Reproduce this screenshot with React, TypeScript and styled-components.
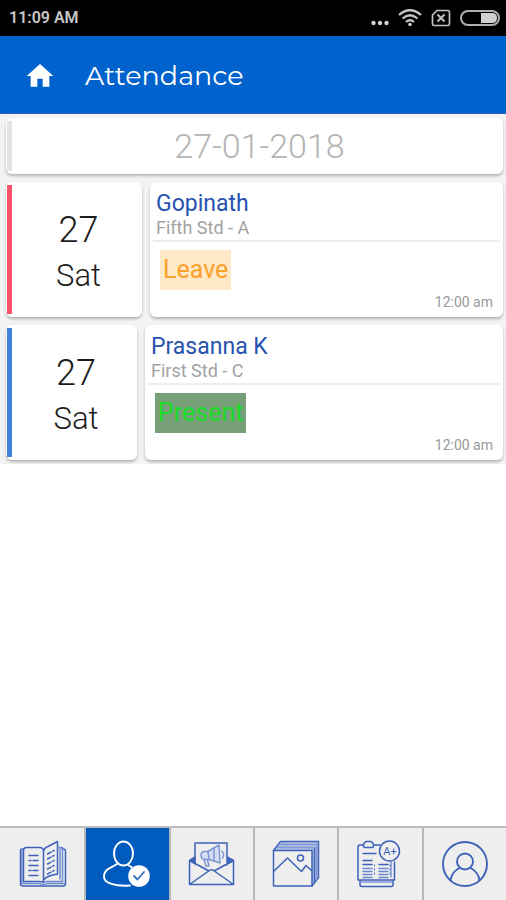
import React from "react";
import styled, { createGlobalStyle } from "styled-components";

const GlobalStyle = createGlobalStyle`
  * { box-sizing: border-box; }
  html, body { margin: 0; background: #ffffff; }
  body { font-family: Roboto, "Liberation Sans", sans-serif; }
  button { font: inherit; }
`;

const Screen = styled.div`
  display: flex;
  flex-direction: column;
  min-height: 100vh;
`;

const StatusBar = styled.div`
  display: flex;
  align-items: center;
  justify-content: space-between;
  height: 36px;
  padding: 0 6px 0 9px;
  background: #000000;
  color: #c8c8c8;
`;

const Clock = styled.span`
  font-size: 16px;
  font-weight: 600;
  line-height: 20px;
`;

const StatusIcons = styled.div`
  display: flex;
  align-items: center;
  gap: 9px;
  svg { display: block; }
`;

const Header = styled.header`
  display: flex;
  align-items: center;
  gap: 28px;
  height: 78px;
  padding: 2px 24px 0;
  background: #0062cc;
  border-bottom: 1px solid #2a63c4;
  color: #ffffff;
`;

const HomeButton = styled.button`
  display: flex;
  padding: 0;
  border: 0;
  background: none;
  color: inherit;
  cursor: pointer;
`;

const Title = styled.h1`
  margin: 0;
  padding-left: 1px;
  font-family: Montserrat, Inter, sans-serif;
  font-size: 27px;
  font-weight: 400;
  line-height: 36px;
`;

const Content = styled.main`
  display: flex;
  flex-direction: column;
  gap: 8px;
  padding: 4px 3px 4px 6px;
  background: #f3f3f3;
`;

const Card = styled.div`
  display: flex;
  min-width: 0;
  border-radius: 6px;
  background: #ffffff;
  box-shadow: 0 2px 3px rgba(0, 0, 0, 0.26);
`;

const Accent = styled.span<{ $color: string }>`
  flex: none;
  width: 5px;
  margin: 3px 0 3px 1px;
  background: ${(p) => p.$color};
`;

const DateCard = styled(Card)`
  height: 56px;
  align-items: stretch;
`;

const DateButton = styled.button`
  flex: 1;
  padding: 0 0 0 4px;
  border: 0;
  background: none;
  color: #b4b4b4;
  font-size: 34px;
  font-weight: 300;
  line-height: 56px;
  cursor: pointer;
`;

const Row = styled.article<{ $day: number; $detail: number }>`
  display: grid;
  grid-template-columns: ${(p) => p.$day}fr ${(p) => p.$detail}fr;
  gap: 8px;
`;

const DayText = styled.div`
  display: flex;
  flex: 1;
  flex-direction: column;
  align-items: center;
  justify-content: center;
  padding: 6px 0 0 3px;
  color: #1c1c1c;
  font-weight: 300;
`;

const DayNumber = styled.span`
  font-size: 36px;
  line-height: 46px;
`;

const DayName = styled.span`
  font-size: 31px;
  line-height: 46px;
`;

const Detail = styled(Card)`
  flex-direction: column;
  height: 135px;
`;

const Person = styled.div`
  margin: 0 3px;
  padding: 8px 3px 2px;
  border-bottom: 2px solid #eeeeee;
`;

const Name = styled.h2`
  margin: 0;
  color: #2752b0;
  font-size: 23px;
  font-weight: 400;
  line-height: 28px;
`;

const ClassName = styled.p`
  margin: 0;
  color: #a2a2a2;
  font-size: 18px;
  font-weight: 400;
  line-height: 20px;
`;

const Status = styled.span<{ $ink: string; $fill: string }>`
  align-self: flex-start;
  margin: 8px 0 0 10px;
  padding: 0 3px;
  background: ${(p) => p.$fill};
  color: ${(p) => p.$ink};
  font-size: 25px;
  line-height: 40px;
`;

const Time = styled.time`
  align-self: flex-end;
  margin: auto 10px 5px 0;
  color: #999999;
  font-size: 14px;
  line-height: 20px;
`;

const Nav = styled.nav`
  display: grid;
  grid-template-columns: repeat(6, 1fr);
  height: 74px;
  margin-top: auto;
  border-top: 2px solid #bdbdbd;
`;

const Tab = styled.button<{ $active?: boolean }>`
  display: flex;
  align-items: center;
  justify-content: center;
  padding: 0;
  border: 0;
  border-left: 2px solid #b8b8b8;
  background: ${(p) => (p.$active ? "#005bbf" : "#eeeeee")};
  color: ${(p) => (p.$active ? "#ffffff" : "#3d62b8")};
  cursor: pointer;
  &:first-child { border-left-color: #eeeeee; }
`;

const Icon = ({ children }: { children: React.ReactNode }) => (
  <svg width="48" height="48" viewBox="0 0 48 48" fill="none" stroke="currentColor" strokeWidth="1.5" strokeLinecap="round" strokeLinejoin="round" aria-hidden="true">
    {children}
  </svg>
);

const BookIcon = () => (
  <Icon>
    <path d="M4 9H3Q1.500 9 1.500 11V44Q1.500 46 4 46H44Q46.500 46 46.500 44V11Q46.500 9 44 9H43" />
    <path d="M4.500 41.500V10Q4.500 7.500 8 7.500H21Q24.500 8 24.500 11V43Q24 41.500 20 41.500Z" />
    <path d="M24.500 11Q25 8 29 6.500L38.500 1.500V34Q28 35.500 24.500 40" />
    <path d="M39 7.500H43.500V41.500H29Q25 41.500 24.500 43M41 9V39M2 43.500H21Q24.500 46.500 28 43.500H46M3 11V43" stroke="#6d8bd0" />
    <path d="M10 15.500H19M10 20.500H12M14 20.500H19M10 25.500H19M10 30.500H12M14 30.500H19M10 35.500H19" />
    <path d="M28.500 14L35 10.500M28.500 19L35 15.500M28.500 24L35 20.500M28.500 29L35 25.500M28.500 34L35 30.500" strokeDasharray="4 2" />
  </Icon>
);

const PresentIcon = () => (
  <Icon>
    <ellipse cx="20.5" cy="13.500" rx="9.500" ry="12" strokeWidth="1.900" />
    <path d="M14 24C9 28 1 28 1 37C1 43 12 46.500 27 45.500M25 24.500Q26 26 28.500 27" strokeWidth="1.900" />
    <circle cx="36" cy="36" r="10.800" fill="#ffffff" stroke="none" />
    <path d="M31 36L34.500 39.500L41 32" stroke="#3970bd" strokeWidth="1.800" />
  </Icon>
);

const MailIcon = () => (
  <Icon>
    <path d="M7 25V3H39V25M7 17L1.500 20.500V44.500H45.500V20.500L39 17M1.500 20.500L21 31M45.500 20.500L26 31M1.500 44.500L20 31.500Q23.500 28 27 31.500L45.500 44.500" />
    <path d="M2 21L7 24V18ZM45 21L40 24V18Z" fill="currentColor" strokeWidth="1" />
    <g stroke="#7f97d2">
      <path d="M31 5L20 11.500H16Q13 12 13 15.500Q13 19 17 19.500H21L32 23Z" fill="#d5def2" />
      <path d="M20 11.500L21 19.500M16 19.500L18 26H21L19.500 20M34 11Q37 14.500 34.500 18M26 9V21" />
    </g>
  </Icon>
);

const GalleryIcon = () => (
  <Icon>
    <path d="M2 10L9 1.500H46V38L40 45V10Z" fill="#b3c2e4" stroke="none" />
    <path d="M1.500 10.500H40V46H1.500Z" fill="#eeeeee" />
    <path d="M1.500 10.500L8.500 1.500H46.500V37.500L40 46M42.500 8V42" />
    <path d="M5 7.500H42.500M7 4.500H44.500V40" stroke="#7f97d2" />
    <path d="M2 31L15.500 18L29.500 31.500L34 25.500L39.500 30.500" />
    <circle cx="28.500" cy="18" r="3" />
  </Icon>
);

const ReportIcon = () => (
  <Icon>
    <path d="M7.500 5H4Q2 5 2 7V40H38.500V22M17.500 5H24M4 40V45Q4 46.500 6 46.500H35Q37 46.500 37 45V40" />
    <path d="M5 42H36M35 22V37" stroke="#7f97d2" />
    <path d="M9 2.500Q9 1.500 10.500 1.500H14.500Q16 1.500 16 2.500L17.500 4V6Q17.500 7.500 16 7.500H9Q7.500 7.500 7.500 6V4Z" />
    <circle cx="33.500" cy="11" r="10" fill="#eeeeee" />
    <path d="M7 13.500H20M7 20.500H16M23 24.500H32M7 24.500H16" />
    <path d="M7 28.500H16M7 31.500H16M7 34.500H16M7 37.500H16M23 28.500H32M23 31.500H32M23 34.500H32M23 37.500H32" stroke="#6f8bcd" />
    <path d="M18.500 25V37M34 25V37" strokeWidth="1" strokeDasharray="1 3" />
    <text x="34" y="15" textAnchor="middle" fontFamily="Roboto, sans-serif" fontSize="11" fill="currentColor" stroke="none">A+</text>
  </Icon>
);

const ProfileIcon = () => (
  <Icon>
    <circle cx="24" cy="24" r="22" strokeWidth="1.900" />
    <circle cx="24" cy="21.500" r="8" strokeWidth="1.900" />
    <path d="M9.500 40Q11 31.500 18.500 28M38.500 40Q37 31.500 29.500 28" strokeWidth="1.900" />
  </Icon>
);

const tabs = [
  { label: "Homework", Drawing: BookIcon },
  { label: "Attendance", Drawing: PresentIcon, active: true },
  { label: "Messages", Drawing: MailIcon },
  { label: "Gallery", Drawing: GalleryIcon },
  { label: "Results", Drawing: ReportIcon },
  { label: "Profile", Drawing: ProfileIcon },
];

const records = [
  { name: "Gopinath", room: "Fifth Std - A", status: "Leave", ink: "#fba12a", fill: "#ffe8c6", accent: "#fb5468", day: 136, detail: 353 },
  { name: "Prasanna K", room: "First Std - C", status: "Present", ink: "#18dc25", fill: "#77a079", accent: "#3f83dc", day: 131, detail: 358 },
];

export default function App() {
  return (
    <Screen>
      <GlobalStyle />
      <StatusBar>
        <Clock>11:09 AM</Clock>
        <StatusIcons>
          <svg width="18" height="20" viewBox="0 0 18 20" fill="#d0d0d0" aria-hidden="true">
            <circle cx="2.500" cy="15" r="2.200" /><circle cx="9" cy="15" r="2.200" /><circle cx="15.500" cy="15" r="2.200" />
          </svg>
          <svg width="24" height="18" viewBox="0 0 24 18" fill="none" stroke="#c8c8c8" strokeWidth="2.200" aria-hidden="true">
            <path d="M1 6Q12 -3.500 23 6M4.500 9.500Q12 3 19.500 9.500M8 13Q12 9.500 16 13" />
            <circle cx="12" cy="15.500" r="1.800" fill="#c8c8c8" stroke="none" />
          </svg>
          <svg width="20" height="18" viewBox="0 0 20 18" fill="none" stroke="#c0c0c0" strokeWidth="1.700" aria-hidden="true">
            <path d="M6 1.500H17Q18.500 1.500 18.500 3V15Q18.500 16.500 17 16.500H3Q1.500 16.500 1.500 15V6Z" />
            <path d="M6.500 5.500L13.500 12.500M13.500 5.500L6.500 12.500" strokeWidth="2" />
          </svg>
          <svg width="40" height="18" viewBox="0 0 40 18" aria-hidden="true">
            <rect x="1" y="2" width="38" height="14" rx="7" fill="none" stroke="#b0b0b0" strokeWidth="2" />
            <path d="M21 4H32Q37 4 37 9T32 14H21Z" fill="#d0d0d0" />
          </svg>
        </StatusIcons>
      </StatusBar>
      <Header>
        <HomeButton aria-label="Home">
          <svg width="32" height="32" viewBox="0 0 24 24" fill="currentColor" aria-hidden="true">
            <path d="M10 20v-6h4v6h5v-8h3L12 3 2 12h3v8z" />
          </svg>
        </HomeButton>
        <Title>Attendance</Title>
      </Header>
      <Content>
        <DateCard>
          <Accent $color="#e4e4e4" />
          <DateButton>27-01-2018</DateButton>
        </DateCard>
        {records.map((r) => (
          <Row key={r.name} $day={r.day} $detail={r.detail}>
            <Card>
              <Accent $color={r.accent} />
              <DayText>
                <DayNumber>27</DayNumber>
                <DayName>Sat</DayName>
              </DayText>
            </Card>
            <Detail>
              <Person>
                <Name>{r.name}</Name>
                <ClassName>{r.room}</ClassName>
              </Person>
              <Status $ink={r.ink} $fill={r.fill}>{r.status}</Status>
              <Time>12:00 am</Time>
            </Detail>
          </Row>
        ))}
      </Content>
      <Nav>
        {tabs.map(({ label, Drawing, active }) => (
          <Tab key={label} $active={active} aria-label={label}>
            <Drawing />
          </Tab>
        ))}
      </Nav>
    </Screen>
  );
}
